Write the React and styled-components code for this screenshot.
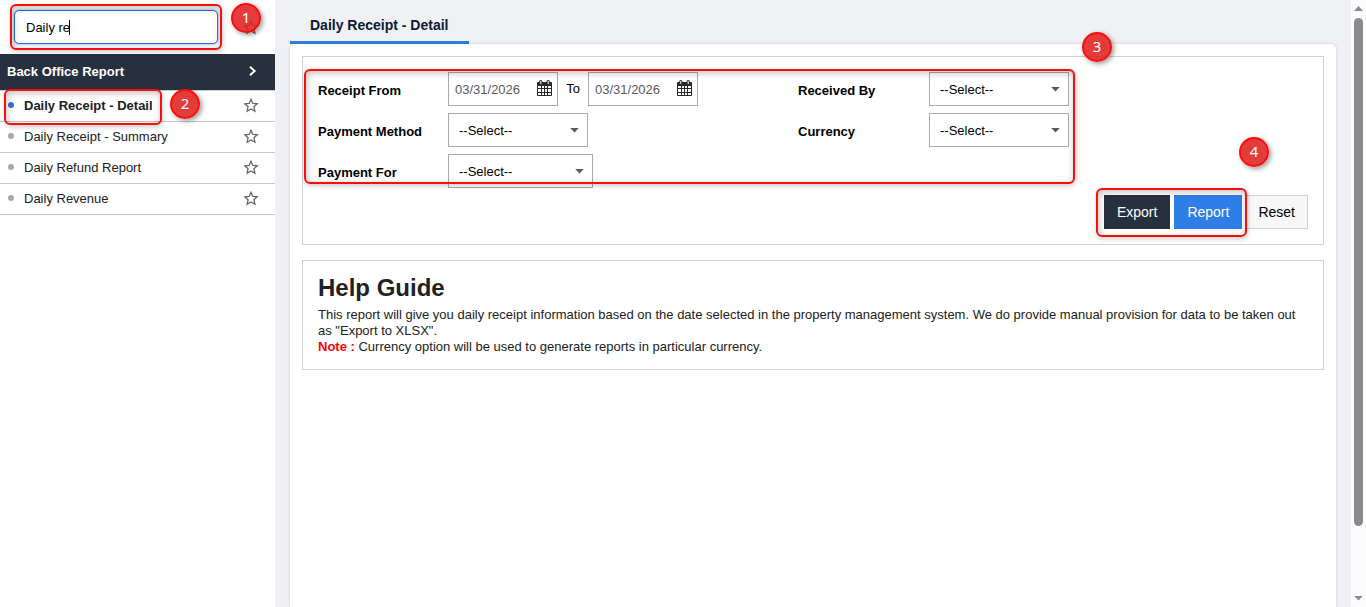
import React, { useState } from "react";
import styled, { createGlobalStyle } from "styled-components";

const GlobalStyle = createGlobalStyle`
  * { box-sizing: border-box; }
  body {
    margin: 0;
    background: #f0f1f4;
    color: #212121;
    font-family: "Liberation Sans", Arial, sans-serif;
    font-size: 13px;
  }
  button, input, select { font: inherit; }
`;

const Page = styled.div`
  display: flex;
  min-height: 100vh;
`;

const Sidebar = styled.aside`
  flex: 0 0 275px;
  background: #fff;
`;

const SearchRow = styled.div`
  display: flex;
  align-items: center;
  justify-content: space-between;
  height: 54px;
  padding: 0 16px 0 14px;
`;

const SearchBox = styled.div`
  position: relative;
  width: 204px;
`;

const SearchInput = styled.input`
  display: block;
  width: 100%;
  height: 34px;
  padding: 0 11px;
  border: 1px solid #2d74d6;
  border-radius: 5px;
  outline: none;
  box-shadow: 0 0 2px 1px rgba(45, 116, 214, 0.35);
  color: #000;
`;

const Caret = styled.span`
  position: absolute;
  top: 10px;
  left: 55px;
  width: 1px;
  height: 15px;
  background: #000;
`;

const GroupButton = styled.button`
  display: flex;
  align-items: center;
  justify-content: space-between;
  width: 100%;
  height: 37px;
  padding: 0 18px 2px 7px;
  border: 0;
  border-bottom: 1px solid #c9cbcf;
  background: #26303e;
  color: #fff;
  font-weight: bold;
`;

const ReportList = styled.ul`
  margin: 0;
  padding: 0;
  list-style: none;
`;

const ReportItem = styled.li`
  display: flex;
  align-items: center;
  justify-content: space-between;
  height: 31px;
  padding: 0 16px 2px 8px;
  border-bottom: 1px solid #c6c7ca;
`;

const ReportLink = styled.a`
  position: relative;
  display: flex;
  align-items: center;
  gap: 10px;
  color: #212121;
  font-weight: ${props => props.$active ? "bold" : "normal"};
  text-decoration: none;

  &::before {
    content: "";
    width: 6px;
    height: 6px;
    border-radius: 50%;
    background: ${props => props.$active ? "#2d74d6" : "#a9a9a9"};
  }
`;

const StarButton = styled.button`
  display: flex;
  padding: 0;
  border: 0;
  background: none;
  color: #666;
`;

const Main = styled.main`
  display: flex;
  flex: 1;
  flex-direction: column;
  padding: 0 15px;
`;

const Tab = styled.a`
  align-self: flex-start;
  height: 44px;
  padding: 0 20px;
  border-bottom: 3px solid #2f7de6;
  color: #0c1a33;
  font-size: 14px;
  font-weight: bold;
  line-height: 50px;
  text-decoration: none;
`;

const Card = styled.div`
  display: flex;
  flex: 1;
  flex-direction: column;
  gap: 15px;
  padding: 12px;
  border-radius: 5px 5px 0 0;
  background: #fff;
  box-shadow: 0 0 3px rgba(0, 0, 0, 0.16);
`;

const FilterForm = styled.form`
  display: flex;
  flex-direction: column;
  gap: 7px;
  padding: 15px;
  border: 1px solid #cfd1d6;
`;

const Fields = styled.div`
  position: relative;
  display: grid;
  grid-template-columns: 130px 350px 131px 140px;
  grid-auto-rows: 34px;
  row-gap: 7px;
  align-self: flex-start;
  align-items: center;
`;

const FieldLabel = styled.label`
  grid-column: ${props => props.$column};
  padding-top: 2px;
  color: #000;
  font-weight: bold;
`;

const DateRange = styled.div`
  display: flex;
  align-items: center;
`;

const DateBox = styled.div`
  display: flex;
  align-items: center;
  width: 110px;
  height: 34px;
  padding: 0 5px 0 6px;
  border: 1px solid #a9abb0;
`;

const DateInput = styled.input`
  flex: 1;
  min-width: 0;
  padding: 0;
  border: 0;
  outline: none;
  background: none;
  color: #5a5a5a;
`;

const IconButton = styled.button`
  display: flex;
  padding: 0 0 2px;
  border: 0;
  background: none;
  color: #26282c;
`;

const DateJoin = styled.label`
  width: 30px;
  padding-bottom: 2px;
  color: #000;
  text-align: center;
`;

const SelectBox = styled.div`
  position: relative;
  width: ${props => props.$wide ? "145px" : "140px"};

  svg {
    position: absolute;
    top: 15px;
    right: 9px;
    pointer-events: none;
  }
`;

const SelectInput = styled.select`
  display: block;
  width: 100%;
  height: 34px;
  padding: 0 10px;
  border: 1px solid #a9abb0;
  border-radius: 0;
  appearance: none;
  background: #fff;
  color: #000;
`;

const Actions = styled.div`
  display: flex;
  justify-content: flex-end;
  gap: 3px;
`;

const ActionGroup = styled.div`
  position: relative;
  display: flex;
  gap: 4px;
`;

const ActionButton = styled.button`
  height: 34px;
  padding: 0 12px;
  border: 1px solid ${props => props.$border || props.$fill};
  background: ${props => props.$fill};
  color: ${props => props.$color || "#fff"};
  font-size: 14px;
`;

const HelpPanel = styled.section`
  padding: 15px 15px 14px;
  border: 1px solid #cfd1d6;
`;

const HelpTitle = styled.h2`
  margin: 0 0 7px;
  font-size: 24px;
  line-height: 24px;
`;

const HelpText = styled.p`
  margin: 0;
  line-height: 16px;

  strong { color: #f00; }
`;

/* Numbered callouts that sit over the page */
const Outline = styled.span`
  position: absolute;
  z-index: 1;
  inset: ${props => props.$inset};
  border: 2px solid #fb0d0d;
  border-radius: 6px;
  box-shadow: 1px 2px 5px rgba(0, 0, 0, 0.2), inset 1px 2px 7px rgba(0, 0, 0, 0.25);
  pointer-events: none;
`;

const Badge = styled.span`
  position: absolute;
  z-index: 2;
  top: ${props => props.$top};
  left: ${props => props.$left};
  width: 30px;
  height: 30px;
  border: 2px solid #fb0d0d;
  border-radius: 50%;
  background: rgba(224, 32, 32, 0.88);
  box-shadow: 2px 2px 5px rgba(0, 0, 0, 0.4);
  color: #fff;
  font-family: "Noto Sans", sans-serif;
  font-size: 15px;
  font-weight: normal;
  line-height: 24px;
  text-align: center;
  pointer-events: none;
`;

const ScrollRail = styled.div`
  position: sticky;
  top: 0;
  display: flex;
  flex: 0 0 15px;
  flex-direction: column;
  align-items: center;
  justify-content: space-between;
  height: 100vh;
  padding: 6px 0;
  background: #fcfcfc;
`;

const ScrollTrack = styled.div`
  flex: 1;
  margin: 7px 0;
`;

const ScrollThumb = styled.div`
  width: 9px;
  height: 89%;
  border-radius: 5px;
  background: #8b8b8b;
`;

const StarIcon = () => (
    <svg width="15" height="15" viewBox="0 0 15 15" fill="none" stroke="currentColor" strokeWidth="1.3">
        <path d="M7 1.3 8.8 5.4 13.2 5.8 9.9 8.7 10.9 13.2 7 10.9 3.1 13.2 4.1 8.7 0.8 5.8 5.2 5.4Z" />
    </svg>
);

const ChevronIcon = () => (
    <svg width="9" height="10" viewBox="0 0 9 10" fill="none" stroke="currentColor" strokeWidth="2">
        <path d="M2 0.7 6.6 5 2 9.3" />
    </svg>
);

const CalendarIcon = () => (
    <svg width="15" height="16" viewBox="0 0 15 16" fill="currentColor">
        <path
            fillRule="evenodd"
            d="M1 2H14Q15 2 15 3V15Q15 16 14 16H1Q0 16 0 15V3Q0 2 1 2Z
               M1 6V8H4V6Z M5 6V8H7V6Z M8 6V8H10V6Z M11 6V8H14V6Z
               M1 9V12H4V9Z M5 9V12H7V9Z M8 9V12H10V9Z M11 9V12H14V9Z
               M1 13V15H4V13Z M5 13V15H7V13Z M8 13V15H10V13Z M11 13V15H14V13Z"
        />
        <rect x="2.5" y="0.5" width="2.5" height="4" rx="1" stroke="currentColor" fill="#bbb" />
        <rect x="10" y="0.5" width="2.5" height="4" rx="1" stroke="currentColor" fill="#bbb" />
    </svg>
);

const Triangle = ({ up, color = "#8b8b8b" }) => (
    <svg width="9" height="5" viewBox="0 0 9 5" fill={color}>
        <path d={up ? "M0 5 4.5 0 9 5Z" : "M0.2 0 4.5 4.6 8.8 0Z"} />
    </svg>
);

const Star = ({ label }) => (
    <StarButton type="button" aria-label={label}>
        <StarIcon />
    </StarButton>
);

const DateField = ({ id }) => {
    const [value, setValue] = useState("03/31/2026");

    return (
        <DateBox>
            <DateInput id={id} value={value} onChange={e => setValue(e.target.value)} />
            <IconButton type="button" aria-label="Open calendar">
                <CalendarIcon />
            </IconButton>
        </DateBox>
    );
};

const SelectField = ({ id, label, column = 1, wide }) => (
    <>
        <FieldLabel htmlFor={id} $column={column}>{label}</FieldLabel>
        <SelectBox $wide={wide}>
            <SelectInput id={id}>
                <option>--Select--</option>
            </SelectInput>
            <Triangle color="#5c5c5c" />
        </SelectBox>
    </>
);

const reports = [
    "Daily Receipt - Detail",
    "Daily Receipt - Summary",
    "Daily Refund Report",
    "Daily Revenue",
];

const App = () => {
    const [search, setSearch] = useState("Daily re");
    const [active, setActive] = useState(reports[0]);

    return (
        <Page>
            <GlobalStyle />
            <Sidebar>
                <SearchRow>
                    <SearchBox>
                        <SearchInput
                            aria-label="Search reports"
                            value={search}
                            onChange={e => setSearch(e.target.value)}
                        />
                        <Caret />
                        <Outline $inset="-6px -4px -6px -4px" />
                        <Badge $top="-7px" $left="217px">1</Badge>
                    </SearchBox>
                    <Star label="Favourites" />
                </SearchRow>
                <GroupButton type="button">
                    Back Office Report
                    <ChevronIcon />
                </GroupButton>
                <ReportList>
                    {reports.map((name, i) => (
                        <ReportItem key={name}>
                            <ReportLink href="#" $active={name === active} onClick={() => setActive(name)}>
                                {name}
                                {i === 0 && <Outline $inset="-9px -9px -12px -4px" />}
                                {i === 0 && <Badge $top="-9px" $left="162px">2</Badge>}
                            </ReportLink>
                            <Star label={"Add " + name + " to favourites"} />
                        </ReportItem>
                    ))}
                </ReportList>
            </Sidebar>

            <Main>
                <Tab href="#">Daily Receipt - Detail</Tab>
                <Card>
                    <FilterForm onSubmit={e => e.preventDefault()}>
                        <Fields>
                            <FieldLabel htmlFor="from" $column={1}>Receipt From</FieldLabel>
                            <DateRange>
                                <DateField id="from" />
                                <DateJoin htmlFor="to">To</DateJoin>
                                <DateField id="to" />
                            </DateRange>
                            <SelectField id="received" label="Received By" column={3} />
                            <SelectField id="method" label="Payment Method" />
                            <SelectField id="currency" label="Currency" column={3} />
                            <SelectField id="for" label="Payment For" wide />
                            <Outline $inset="-3px -6px 4px -14px" />
                            <Badge $top="-40px" $left="764px">3</Badge>
                        </Fields>
                        <Actions>
                            <ActionGroup>
                                <ActionButton type="button" $fill="#26303e">Export</ActionButton>
                                <ActionButton type="submit" $fill="#2f7de6">Report</ActionButton>
                                <Outline $inset="-7px -5px -8px -8px" />
                                <Badge $top="-58px" $left="135px">4</Badge>
                            </ActionGroup>
                            <ActionButton type="reset" $fill="#f7f7f8" $border="#cfd1d6" $color="#000">Reset</ActionButton>
                        </Actions>
                    </FilterForm>
                    <HelpPanel>
                        <HelpTitle>Help Guide</HelpTitle>
                        <HelpText>
                            This report will give you daily receipt information based on the date selected in the property management system. We do provide manual provision for data to be taken out as "Export to XLSX".
                        </HelpText>
                        <HelpText>
                            <strong>Note :</strong> Currency option will be used to generate reports in particular currency.
                        </HelpText>
                    </HelpPanel>
                </Card>
            </Main>

            <ScrollRail aria-hidden="true">
                <Triangle up />
                <ScrollTrack>
                    <ScrollThumb />
                </ScrollTrack>
                <Triangle />
            </ScrollRail>
        </Page>
    );
};

export default App;
